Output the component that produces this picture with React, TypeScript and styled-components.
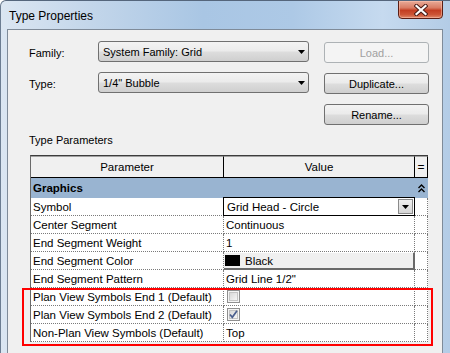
import React from 'react';
import styled, {createGlobalStyle} from 'styled-components';

interface Param {
  name: string;
  value?: string;
  kind: 'text' | 'combo' | 'color' | 'check';
  checked?: boolean;
}

const params: Param[] = [
  {name: 'Symbol', value: 'Grid Head - Circle', kind: 'combo'},
  {name: 'Center Segment', value: 'Continuous', kind: 'text'},
  {name: 'End Segment Weight', value: '1', kind: 'text'},
  {name: 'End Segment Color', value: 'Black', kind: 'color'},
  {name: 'End Segment Pattern', value: 'Grid Line 1/2"', kind: 'text'},
];

const marked: Param[] = [
  {name: 'Plan View Symbols End 1 (Default)', kind: 'check', checked: false},
  {name: 'Plan View Symbols End 2 (Default)', kind: 'check', checked: true},
  {name: 'Non-Plan View Symbols (Default)', value: 'Top', kind: 'text'},
];

const Arrow = () => (
  <svg width="7" height="4" viewBox="0 0 7 4">
    <path d="M0 0 H7 L3.5 4 Z" fill="#000"/>
  </svg>
);

const CloseGlyph = () => (
  <svg width="14" height="12" viewBox="0 0 14 12">
    <path d="M2.5 2 L11.5 10 M11.5 2 L2.5 10" stroke="#4a1c16" strokeWidth="4.2" strokeLinecap="square"/>
    <path d="M2.5 2 L11.5 10 M11.5 2 L2.5 10" stroke="#fff" strokeWidth="2.2" strokeLinecap="square"/>
  </svg>
);

const Collapse = () => (
  <svg width="7" height="9" viewBox="0 0 7 9">
    <path d="M0.5 4 L3.5 1 L6.5 4 M0.5 8 L3.5 5 L6.5 8" stroke="#000" strokeWidth="1.4" fill="none"/>
  </svg>
);

const CheckBox = ({checked}: {checked?: boolean}) => (
  <svg width="13" height="13" viewBox="0 0 13 13">
    <defs>
      <linearGradient id="cb" x1="0" y1="0" x2="1" y2="1">
        <stop offset="0" stopColor="#d6d6d6"/>
        <stop offset="1" stopColor="#f8f8f8"/>
      </linearGradient>
    </defs>
    <rect x="0.5" y="0.5" width="12" height="12" fill="#f4f4f4" stroke="#8f8f8f"/>
    <rect x="2.5" y="2.5" width="8" height="8" fill="url(#cb)" stroke="#c4c4c4"/>
    {checked && (
      <path d="M3 6.5 L5.3 9.3 L10 2.8" stroke="#4b5f8e" strokeWidth="1.7" fill="none"/>
    )}
  </svg>
);

const Row = ({p}: {p: Param}) => (
  <>
    <NameCell>{p.name}</NameCell>
    <ValueCell>
      {p.kind === 'text' && p.value}
      {p.kind === 'combo' && (
        <Combo>
          <span>{p.value}</span>
          <ComboButton><Arrow/></ComboButton>
        </Combo>
      )}
      {p.kind === 'color' && (
        <ColorButton>
          <Swatch/>
          {p.value}
        </ColorButton>
      )}
      {p.kind === 'check' && (
        <CheckWrap><CheckBox checked={p.checked}/></CheckWrap>
      )}
    </ValueCell>
    <EqCell/>
  </>
);

const App = () => (
  <>
    <GlobalStyle/>
    <Window>
      <TitleBar>
        <Title>Type Properties</Title>
        <CloseButton><CloseGlyph/></CloseButton>
      </TitleBar>
      <Client>
        <TopGrid>
          <Label>Family:</Label>
          <Dropdown>
            <span>System Family: Grid</span>
            <Arrow/>
          </Dropdown>
          <Button disabled>Load...</Button>
          <Label>Type:</Label>
          <Dropdown>
            <span>1/4" Bubble</span>
            <Arrow/>
          </Dropdown>
          <Button>Duplicate...</Button>
          <Button $col={3}>Rename...</Button>
        </TopGrid>
        <SectionLabel>Type Parameters</SectionLabel>
        <Table>
          <HeadCell>Parameter</HeadCell>
          <HeadCell>Value</HeadCell>
          <HeadCell $narrow>=</HeadCell>
          <GroupRow>
            <span>Graphics</span>
            <GroupToggle><Collapse/></GroupToggle>
          </GroupRow>
          {params.map(p => <Row key={p.name} p={p}/>)}
          <Marked>
            {marked.map(p => <Row key={p.name} p={p}/>)}
            <RedBox/>
          </Marked>
        </Table>
      </Client>
    </Window>
  </>
);

const GlobalStyle = createGlobalStyle`
  html, body {
    margin: 0;
    padding: 0;
    background: #fff;
  }
  body {
    font-family: "Liberation Sans", Arial, sans-serif;
    overflow: hidden;
  }
`;

const Window = styled.div`
  width: 450px;
  height: 353px;
  box-sizing: border-box;
  display: flex;
  flex-direction: column;
  border-top: 1px solid #55667c;
  border-left: 1px solid #6c7d92;
  border-top-left-radius: 6px;
  overflow: hidden;
  background: linear-gradient(90deg, #dbe6f2 0%, #c3d6ea 20%, #a9c6e4 45%, #adc9e6 65%, #c6daef 85%, #b3cce6 100%);
`;

const TitleBar = styled.div`
  height: 28px;
  flex: none;
  display: flex;
  justify-content: space-between;
  align-items: flex-start;
`;

const Title = styled.div`
  font-size: 12px;
  color: #000;
  padding: 8px 0 0 8px;
`;

const CloseButton = styled.div`
  width: 45px;
  height: 19px;
  margin: -1px 7px 0 0;
  box-sizing: border-box;
  display: flex;
  align-items: center;
  justify-content: center;
  border: 1px solid #5a1e15;
  border-radius: 0 0 4px 4px;
  background: linear-gradient(#e9ab98 0%, #d97c64 40%, #c33e22 55%, #cd5536 80%, #e08a6c 100%);
  box-shadow: inset 0 0 0 1px rgba(255, 200, 180, 0.5);
`;

const Client = styled.div`
  flex: 1;
  margin: 0 7px 0 6px;
  border: 1px solid #7f8b99;
  border-bottom: none;
  background: #f0f0f0;
  padding-top: 12px;
`;

const TopGrid = styled.div`
  display: grid;
  grid-template-columns: 54px 211px 105px;
  grid-auto-rows: 21px;
  column-gap: 15px;
  row-gap: 10px;
  margin-left: 21px;
`;

const Label = styled.div`
  font-size: 11px;
  color: #000;
  display: flex;
  align-items: center;
`;

const winGradient = `linear-gradient(#f3f3f3 0%, #ebebeb 48%, #dddddd 52%, #cfcfcf 100%)`;

const Dropdown = styled.div`
  display: flex;
  align-items: center;
  justify-content: space-between;
  box-sizing: border-box;
  height: 21px;
  margin-top: -1px;
  padding: 0 3px 0 4px;
  border: 1px solid #707070;
  border-radius: 3px;
  background: ${winGradient};
  font-size: 11px;
  color: #000;
`;

const Button = styled.button<{$col?: number}>`
  grid-column: ${p => p.$col ?? 'auto'};
  box-sizing: border-box;
  height: 21px;
  padding: 0;
  border: 1px solid #707070;
  border-radius: 3px;
  background: ${winGradient};
  font-family: "Liberation Sans", Arial, sans-serif;
  font-size: 11px;
  color: #000;
  &:disabled {
    border-color: #adb2b5;
    background: #f4f4f4;
    color: #a0a0a0;
  }
`;

const SectionLabel = styled.div`
  font-size: 11px;
  line-height: 13px;
  color: #000;
  margin: 9px 0 8px 21px;
`;

const Table = styled.div`
  display: grid;
  grid-template-columns: 193px 191px 13px;
  width: 398px;
  box-sizing: border-box;
  margin-left: 22px;
  border-top: 1px solid #3c3c3c;
  border-left: 1px solid #6a6a6a;
  font-size: 11.5px;
  color: #000;
`;

const HeadCell = styled.div<{$narrow?: boolean}>`
  display: flex;
  align-items: center;
  justify-content: center;
  background: #f0f0f0;
  border-top: 1px solid #a0a0a0;
  border-right: 1px solid #000;
  border-bottom: 1px solid #000;
  box-sizing: border-box;
  height: 22px;
  font-size: ${p => (p.$narrow ? '12px' : '11.5px')};
`;

const GroupRow = styled.div`
  grid-column: 1 / -1;
  height: 20px;
  display: flex;
  align-items: center;
  justify-content: space-between;
  background: #99b4d1;
  font-weight: bold;
  font-size: 11.5px;
  padding-left: 2px;
`;

const GroupToggle = styled.div`
  width: 13px;
  display: flex;
  justify-content: center;
`;

const Cell = styled.div`
  height: 18px;
  box-sizing: border-box;
  border-right: 1px dotted #7a7a7a;
  border-bottom: 1px dotted #7a7a7a;
  background: #fff;
  display: flex;
  align-items: center;
  white-space: nowrap;
`;

const NameCell = styled(Cell)`
  padding-left: 2px;
`;

const ValueCell = styled(Cell)`
  padding-left: 2px;
  position: relative;
`;

const EqCell = styled(Cell)``;

const Combo = styled.div`
  flex: 1;
  align-self: stretch;
  margin: -1px -1px -1px -3px;
  padding-left: 3px;
  border: 1px solid #000;
  background: #fff;
  display: flex;
  align-items: center;
  justify-content: space-between;
`;

const ComboButton = styled.div`
  width: 15px;
  height: 15px;
  box-sizing: border-box;
  margin-right: 1px;
  display: flex;
  align-items: center;
  justify-content: center;
  border: 1px solid #8a8a8a;
  background: linear-gradient(#f0f0f0, #d6d6d6);
`;

const ColorButton = styled.div`
  flex: 1;
  align-self: stretch;
  margin: 0 -1px -1px -2px;
  display: flex;
  align-items: center;
  gap: 5px;
  background: #f0f0f0;
  border-top: 1px solid #fff;
  border-right: 2px solid #6a6a6a;
  border-bottom: 2px solid #6a6a6a;
`;

const Swatch = styled.div`
  width: 15px;
  height: 11px;
  background: #000;
  margin-left: 1px;
`;

const CheckWrap = styled.div`
  display: flex;
  margin-left: 1px;
`;

const Marked = styled.div`
  grid-column: 1 / -1;
  display: grid;
  grid-template-columns: subgrid;
  position: relative;
`;

const RedBox = styled.div`
  position: absolute;
  top: 0;
  bottom: -4px;
  left: -9px;
  right: -5px;
  border: 2px solid #f00;
  pointer-events: none;
`;

export default App;
